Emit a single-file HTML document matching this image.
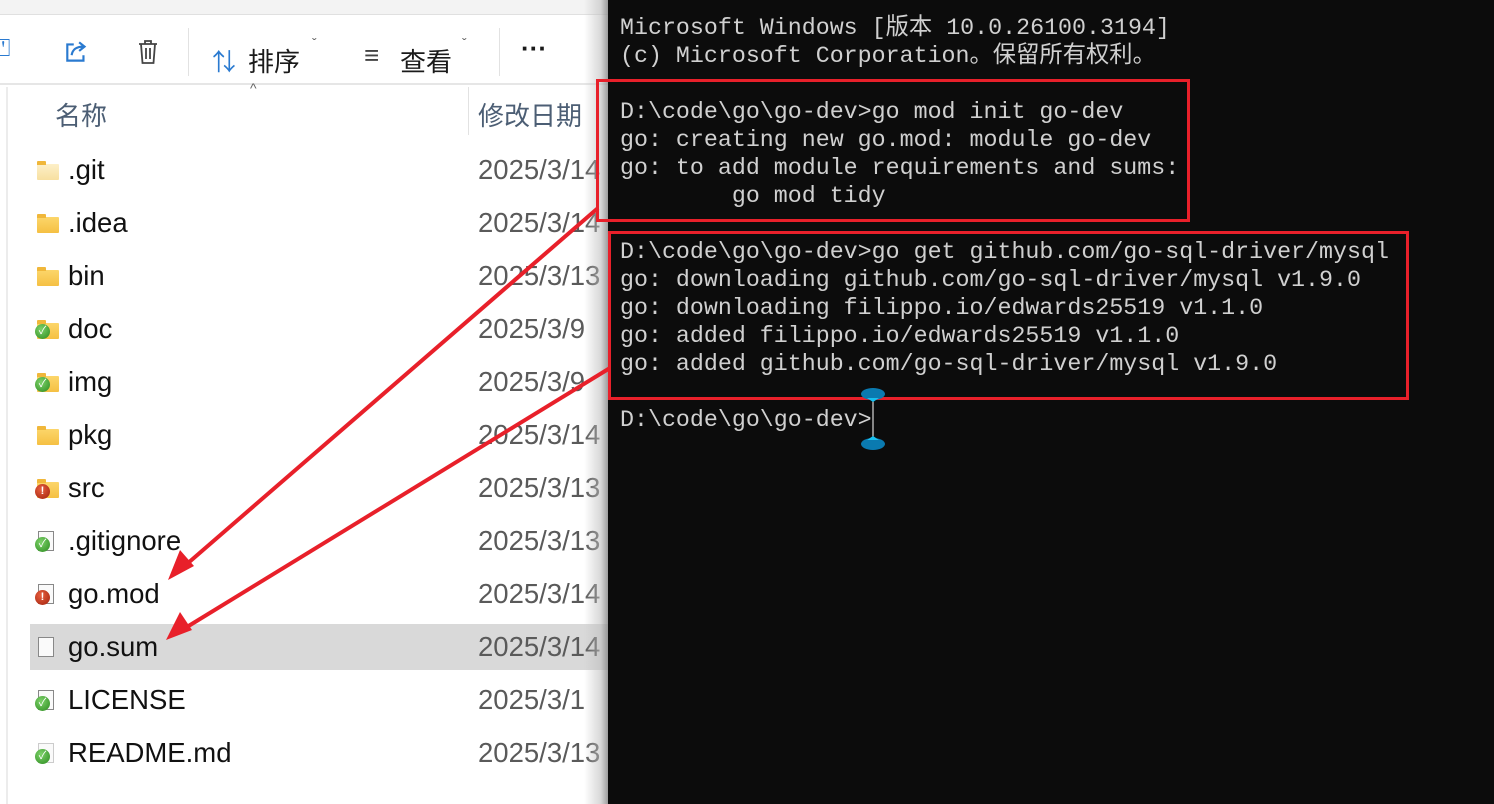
<!DOCTYPE html>
<html><head><meta charset="utf-8"><style>
*{margin:0;padding:0;box-sizing:border-box}
body{width:1494px;height:804px;position:relative;overflow:hidden;background:#fff;font-family:"Segoe UI","Liberation Sans","Noto Sans CJK SC",sans-serif}
.ex{position:absolute;left:0;top:0;width:608px;height:804px;background:#fff}
.topbar{position:absolute;left:0;top:0;width:608px;height:15px;background:#f3f3f3;border-bottom:1px solid #e0e0e0}
.tb{position:absolute;left:0;top:15px;width:608px;height:70px;border-bottom:2px solid #e6e6e6}
.t{position:absolute;font-size:26px;color:#1a1a1a;font-family:"Liberation Sans","Noto Sans CJK SC",sans-serif}
.sep{position:absolute;top:13px;width:1px;height:48px;background:#e2e2e2}
.row{position:absolute;left:30px;width:578px;height:46px}
.nm{position:absolute;left:68px;font-size:27.5px;color:#111;font-family:"Liberation Sans","Noto Sans CJK SC",sans-serif}
.dt{position:absolute;left:478px;font-size:27.5px;color:#5a5a5a;font-family:"Liberation Sans",sans-serif}
.fd{position:absolute;left:37px;width:22px;height:16px;background:linear-gradient(#fcd66a,#f5c043);border-radius:1px}
.fd:before{content:"";position:absolute;left:0;top:-3px;width:9px;height:4px;background:#f0b73a;border-radius:1px 1px 0 0}
.fl{position:absolute;left:38px;width:16px;height:20px;border:1px solid #888;background:#fafafa}
.ok{position:absolute;left:35px;width:15px;height:15px;border-radius:50%;background:radial-gradient(circle at 40% 35%,#7ed26a,#2a8a1e);color:#fff;font-size:11px;line-height:15px;text-align:center}
.er{position:absolute;left:35px;width:15px;height:15px;border-radius:50%;background:radial-gradient(circle at 40% 35%,#e86040,#a0200c);color:#fff;font-size:11px;font-weight:bold;line-height:15px;text-align:center}
.fade{position:absolute;left:584px;top:0;width:24px;height:804px;background:linear-gradient(90deg,rgba(255,255,255,0),rgba(190,190,190,.6) 70%,rgba(140,140,140,.85))}
.term{position:absolute;left:608px;top:0;width:886px;height:804px;background:#0c0c0c}
.term pre{position:absolute;left:12px;top:14px;font-family:"Liberation Mono","Noto Sans CJK SC",monospace;font-size:23.3px;line-height:28px;color:#d0d0d0}
.box{position:absolute;border:3px solid #e8202a}
</style></head><body>
<div class="ex">
 <div class="topbar"></div>
 <div class="tb">
  <div class="t" style="left:-4px;top:20px;color:#2a7ad0;font-size:24px">⍞</div>
  <svg style="position:absolute;left:63px;top:24px" width="28" height="26" viewBox="0 0 26 24"><path d="M10 5H4v15h15v-5" fill="none" stroke="#2a7ad0" stroke-width="2"/><path d="M8 15c1-6 5-8 11-8M15 3l5 4-5 4" fill="none" stroke="#2a7ad0" stroke-width="2"/></svg>
  <svg style="position:absolute;left:136px;top:23px" width="24" height="28" viewBox="0 0 24 26"><path d="M3 5h18M9 5V2h6v3M5 5l1.5 19h11L19 5M10 9v11M14 9v11" fill="none" stroke="#444" stroke-width="1.8"/></svg>
  <div class="sep" style="left:188px"></div>
  <div class="t" style="left:212px;top:27px;color:#2a7ad0;font-size:24px">⇅</div>
  <div class="t" style="left:248px;top:27px">排序</div>
  <div class="t" style="left:312px;top:20px;font-size:14px;color:#666">ˇ</div>
  <div class="t" style="left:364px;top:25px;font-size:26px;color:#444">≡</div>
  <div class="t" style="left:400px;top:27px">查看</div>
  <div class="t" style="left:462px;top:20px;font-size:14px;color:#666">ˇ</div>
  <div class="sep" style="left:499px"></div>
  <div class="t" style="left:521px;top:18px;font-weight:bold;font-size:26px">···</div>
 </div>
 <div class="t" style="left:250px;top:80px;font-size:14px;color:#666">^</div>
 <div style="position:absolute;left:6px;top:87px;width:2px;height:717px;background:#ececec"></div>
 <div class="t" style="left:55px;top:96px;font-size:26px;color:#4c5e74">名称</div>
 <div style="position:absolute;left:468px;top:87px;width:1px;height:48px;background:#e2e2e2"></div>
 <div class="t" style="left:478px;top:96px;font-size:26px;color:#4c5e74">修改日期</div>

 <div class="row" style="top:624px;background:#d9d9d9"></div>

 <div class="fd" style="top:164px;background:linear-gradient(#fdf0c8,#f7e0a0)"></div><div class="nm" style="top:154px">.git</div><div class="dt" style="top:154px">2025/3/14</div>
 <div class="fd" style="top:217px"></div><div class="nm" style="top:207px">.idea</div><div class="dt" style="top:207px">2025/3/14</div>
 <div class="fd" style="top:270px"></div><div class="nm" style="top:260px">bin</div><div class="dt" style="top:260px">2025/3/13</div>
 <div class="fd" style="top:323px"></div><div class="ok" style="top:324px">✓</div><div class="nm" style="top:313px">doc</div><div class="dt" style="top:313px">2025/3/9</div>
 <div class="fd" style="top:376px"></div><div class="ok" style="top:377px">✓</div><div class="nm" style="top:366px">img</div><div class="dt" style="top:366px">2025/3/9</div>
 <div class="fd" style="top:429px"></div><div class="nm" style="top:419px">pkg</div><div class="dt" style="top:419px">2025/3/14</div>
 <div class="fd" style="top:482px"></div><div class="er" style="top:484px">!</div><div class="nm" style="top:472px">src</div><div class="dt" style="top:472px">2025/3/13</div>
 <div class="fl" style="top:531px"></div><div class="ok" style="top:537px">✓</div><div class="nm" style="top:525px">.gitignore</div><div class="dt" style="top:525px">2025/3/13</div>
 <div class="fl" style="top:584px"></div><div class="er" style="top:590px">!</div><div class="nm" style="top:578px">go.mod</div><div class="dt" style="top:578px">2025/3/14</div>
 <div class="fl" style="top:637px"></div><div class="nm" style="top:631px">go.sum</div><div class="dt" style="top:631px">2025/3/14</div>
 <div class="fl" style="top:690px"></div><div class="ok" style="top:696px">✓</div><div class="nm" style="top:684px">LICENSE</div><div class="dt" style="top:684px">2025/3/1</div>
 <div class="fl" style="top:743px;border-color:#ccc"></div><div class="ok" style="top:749px">✓</div><div class="nm" style="top:737px">README.md</div><div class="dt" style="top:737px">2025/3/13</div>
 <div class="fade"></div>
</div>
<div class="term"><pre>Microsoft Windows [版本 10.0.26100.3194]
(c) Microsoft Corporation。保留所有权利。

D:\code\go\go-dev>go mod init go-dev
go: creating new go.mod: module go-dev
go: to add module requirements and sums:
        go mod tidy

D:\code\go\go-dev>go get github.com/go-sql-driver/mysql
go: downloading github.com/go-sql-driver/mysql v1.9.0
go: downloading filippo.io/edwards25519 v1.1.0
go: added filippo.io/edwards25519 v1.1.0
go: added github.com/go-sql-driver/mysql v1.9.0

D:\code\go\go-dev></pre></div>
<div class="box" style="left:596px;top:79px;width:594px;height:143px"></div>
<div class="box" style="left:608px;top:231px;width:801px;height:169px"></div>
<svg style="position:absolute;left:0;top:0" width="1494" height="804">
 <line x1="873" y1="397" x2="873" y2="440" stroke="#fff" stroke-width="1"/>
 <ellipse cx="873" cy="394" rx="12" ry="6" fill="#0a7ab0"/><ellipse cx="873" cy="444" rx="12" ry="6" fill="#0a7ab0"/>
 <path d="M867 398h12l-6 4z" fill="#18c0f0"/><path d="M867 440h12l-6-4z" fill="#18c0f0"/>
 <g stroke="#e8202a" stroke-width="4" fill="#e8202a">
  <line x1="598" y1="208" x2="180" y2="570"/>
  <line x1="610" y1="368" x2="182" y2="630"/>
 </g>
 <path d="M168 580l12-30 14 16z" fill="#e8202a"/>
 <path d="M166 640l14-28 12 18z" fill="#e8202a"/>
</svg>
</body></html>
